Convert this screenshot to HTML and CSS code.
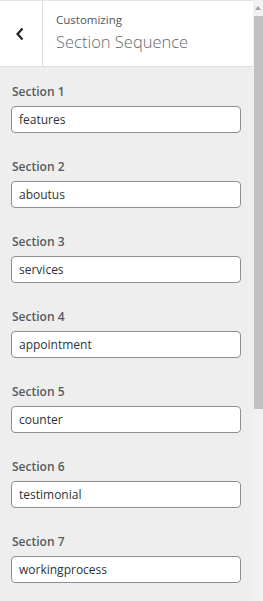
FILE: index.html
```html
<!DOCTYPE html>
<html lang="en">
<head>
<meta charset="utf-8">
<title>Section Sequence</title>
<link rel="stylesheet" href="styles.css">
</head>
<body>
<div class="frame">
  <div class="panel">
    <header class="header">
      <button class="back" type="button" aria-label="Back">
        <svg width="10" height="14" viewBox="0 0 10 14"><polyline points="7.5,1.5 2.5,7 7.5,12.5" fill="none" stroke="#1d2327" stroke-width="2.2"/></svg>
      </button>
      <div class="titles">
        <span class="sub">Customizing</span>
        <span class="title">Section Sequence</span>
      </div>
    </header>
    <main class="content">
      <div class="field"><label class="label">Section 1</label><input class="input" type="text" value="features"></div>
      <div class="field"><label class="label">Section 2</label><input class="input" type="text" value="aboutus"></div>
      <div class="field"><label class="label">Section 3</label><input class="input" type="text" value="services"></div>
      <div class="field"><label class="label">Section 4</label><input class="input" type="text" value="appointment"></div>
      <div class="field"><label class="label">Section 5</label><input class="input" type="text" value="counter"></div>
      <div class="field"><label class="label">Section 6</label><input class="input" type="text" value="testimonial"></div>
      <div class="field"><label class="label">Section 7</label><input class="input" type="text" value="workingprocess"></div>
    </main>
  </div>
  <div class="scrollbar">
    <div class="arrow"></div>
    <div class="thumb"></div>
  </div>
</div>
</body>
</html>
```
FILE: styles.css
```css
html, body {
  margin: 0;
  padding: 0;
  height: 100%;
  overflow: hidden;
}
body {
  background: #eeeeee;
  font-family: "Open Sans", "Noto Sans", sans-serif;
  color: #50575e;
}
.frame {
  display: flex;
  height: 601px;
}
.panel {
  flex: 1;
  display: flex;
  flex-direction: column;
  background: #eeeeee;
  min-width: 0;
}
.header {
  display: flex;
  height: 65px;
  background: #fff;
  border-top: 1px solid #e4e4e4;
  border-bottom: 1px solid #dddddd;
  flex-shrink: 0;
}
.back {
  width: 43px;
  border: 0;
  border-right: 1px solid #dddddd;
  background: #fff;
  padding: 0;
  display: flex;
  align-items: center;
  justify-content: center;
  padding-right: 2px;
}
.back svg { display: block; }
.titles {
  display: flex;
  flex-direction: column;
  padding-left: 13px;
  padding-top: 11px;
}
.sub {
  font-size: 11.5px;
  line-height: 16px;
  color: #50575e;
}
.title {
  font-size: 16.5px;
  font-weight: 300;
  line-height: 26px;
  color: #646970;
  margin-top: 1px;
}
.content {
  display: flex;
  flex-direction: column;
  padding: 16px 12px 0 11px;
}
.field {
  display: flex;
  flex-direction: column;
  margin-bottom: 25px;
}
.label {
  font-size: 12px;
  font-weight: 600;
  line-height: 18px;
  padding-left: 1px;
  margin-bottom: 5px;
  color: #555b61;
}
.input {
  box-sizing: border-box;
  height: 27px;
  width: 100%;
  border: 1px solid #8c8f94;
  border-radius: 4px;
  background: #fff;
  padding: 0 7px;
  font-family: "Open Sans", "Noto Sans", sans-serif;
  font-size: 12px;
  color: #2c3338;
  outline: none;
}
.scrollbar {
  width: 10px;
  flex-shrink: 0;
  background: #f1f1f1;
  display: flex;
  flex-direction: column;
  align-items: flex-end;
}
.arrow {
  width: 0;
  height: 0;
  margin: 6px 2px 6px 0;
  border-left: 3px solid transparent;
  border-right: 3px solid transparent;
  border-bottom: 4px solid #a3a3a3;
}
.thumb {
  width: 9px;
  height: 393px;
  background: #c1c1c1;
}
```
